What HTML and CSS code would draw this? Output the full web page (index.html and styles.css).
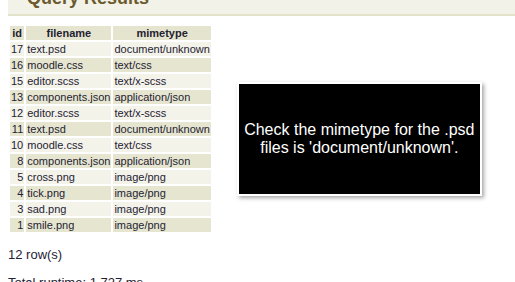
FILE: index.html
```html
<!DOCTYPE html>
<html lang="en">
<head>
    <meta charset="UTF-8">
    <title>Query Results</title>
    <link rel="stylesheet" href="styles.css">
</head>
<body>
    <div class="panel-head">
        <h2>Query Results</h2>
    </div>
    <div class="results">
        <table class="grid">
            <tr><th>id</th><th>filename</th><th>mimetype</th></tr>
            <tr class="odd"><td class="num">17</td><td>text.psd</td><td>document/unknown</td></tr>
            <tr class="even"><td class="num">16</td><td>moodle.css</td><td>text/css</td></tr>
            <tr class="odd"><td class="num">15</td><td>editor.scss</td><td>text/x-scss</td></tr>
            <tr class="even"><td class="num">13</td><td>components.json</td><td>application/json</td></tr>
            <tr class="odd"><td class="num">12</td><td>editor.scss</td><td>text/x-scss</td></tr>
            <tr class="even"><td class="num">11</td><td>text.psd</td><td>document/unknown</td></tr>
            <tr class="odd"><td class="num">10</td><td>moodle.css</td><td>text/css</td></tr>
            <tr class="even"><td class="num">8</td><td>components.json</td><td>application/json</td></tr>
            <tr class="odd"><td class="num">5</td><td>cross.png</td><td>image/png</td></tr>
            <tr class="even"><td class="num">4</td><td>tick.png</td><td>image/png</td></tr>
            <tr class="odd"><td class="num">3</td><td>sad.png</td><td>image/png</td></tr>
            <tr class="even"><td class="num">1</td><td>smile.png</td><td>image/png</td></tr>
        </table>
        <div class="note">Check the mimetype for the .psd files is 'document/unknown'.</div>
    </div>
    <p class="meta">12 row(s)</p>
    <p class="meta">Total runtime: 1.727 ms</p>
</body>
</html>
```

FILE: styles.css
```css
body {
    margin: 0 0 0 8px;
    font-family: 'Liberation Sans', Arial, sans-serif;
    color: #1f2233;
    background: #fff;
    overflow: hidden;
}
.panel-head {
    background: #f2f2e9;
    border-bottom: 2px solid #e3e3cb;
    height: 40px;
    margin-top: -26px;
    padding-left: 19px;
}
.panel-head h2 {
    margin: 0;
    padding-top: 14px;
    font-size: 18px;
    line-height: 20px;
    font-weight: 700;
    color: #6b5b2c;
}
.results {
    display: flex;
    align-items: flex-start;
    margin-top: 8px;
}
.grid {
    border-spacing: 2px;
    font-size: 11px;
    line-height: 14px;
}
.grid th {
    background: #e5e5cf;
    font-weight: 700;
    padding: 0 2px;
    text-align: center;
}
.grid td {
    padding: 0 1px;
    white-space: nowrap;
}
.grid .num {
    text-align: right;
}
.grid tr.odd td {
    background: #f3f3ea;
}
.grid tr.even td {
    background: #e6e6d0;
}
.note {
    box-sizing: border-box;
    width: 245px;
    height: 114px;
    margin: 58px 0 0 24px;
    padding: 0 4px;
    display: flex;
    align-items: center;
    justify-content: center;
    text-align: center;
    background: #000;
    color: #fff;
    font-size: 16px;
    line-height: 18px;
    border: 2px solid #fff;
    box-shadow: 2px 2px 4px rgba(0,0,0,0.35);
}
.meta {
    margin: 13px 0 0;
    font-size: 13px;
    line-height: 15px;
}
```
